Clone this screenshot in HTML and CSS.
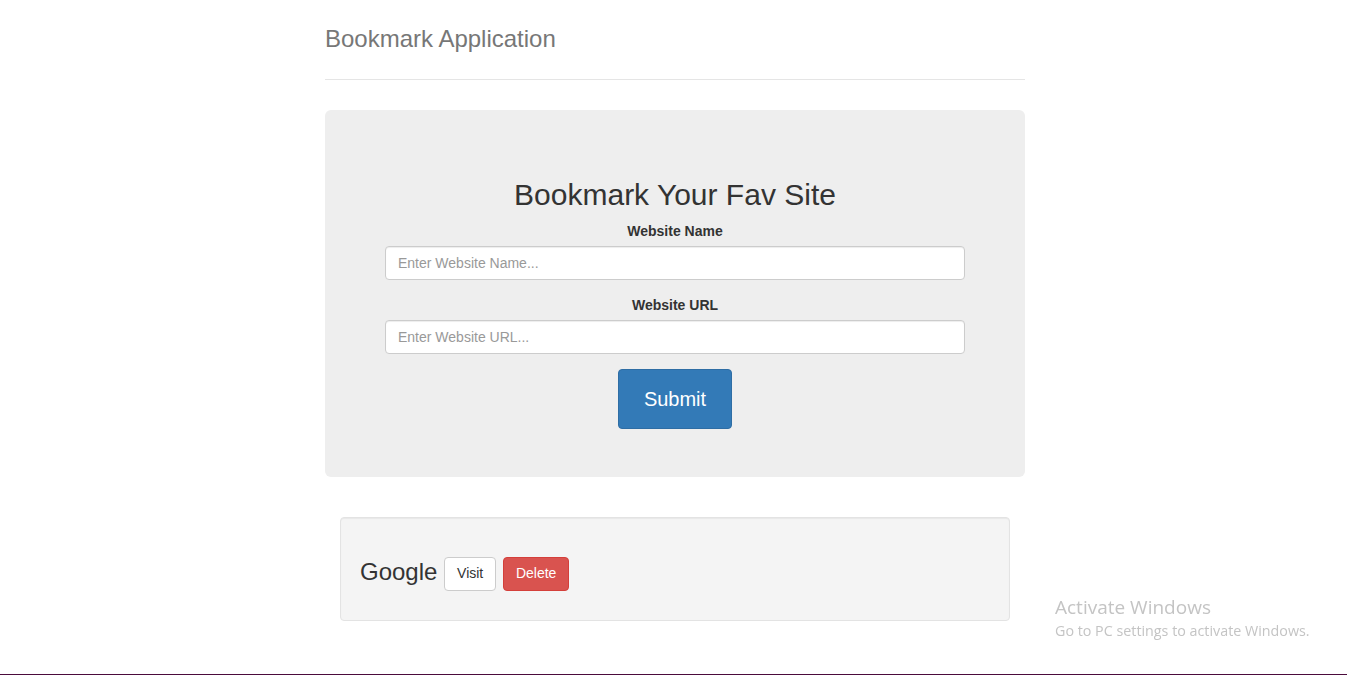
FILE: index.html
```html
<!DOCTYPE html>
<html lang="en">
<head>
<meta charset="utf-8">
<title>Bookmark Application</title>
<link rel="stylesheet" href="styles.css">
</head>
<body>
<div class="container">
  <div class="header">
    <h3 class="brand">Bookmark Application</h3>
  </div>
  <div class="jumbotron">
    <h2 class="jumbo-title">Bookmark Your Fav Site</h2>
    <form class="bm-form">
      <div class="form-group">
        <label class="form-label" for="siteName">Website Name</label>
        <input class="form-control" id="siteName" type="text" placeholder="Enter Website Name...">
      </div>
      <div class="form-group">
        <label class="form-label" for="siteUrl">Website URL</label>
        <input class="form-control" id="siteUrl" type="text" placeholder="Enter Website URL...">
      </div>
      <button class="btn btn-primary btn-submit" type="button">Submit</button>
    </form>
  </div>
  <div class="results">
    <div class="well">
      <h3 class="bm-name">Google <a class="btn btn-default" href="#">Visit</a> <a class="btn btn-danger" href="#">Delete</a></h3>
    </div>
  </div>
</div>
<div class="activate">
  <div class="activate-title">Activate Windows</div>
  <div class="activate-sub">Go to PC settings to activate Windows.</div>
</div>
<div class="taskbar-line"></div>
</body>
</html>
```
FILE: styles.css
```css
* { box-sizing: border-box; }
html, body { margin: 0; padding: 0; }
body {
  font-family: "Liberation Sans", Arial, Helvetica, sans-serif;
  font-size: 14px;
  line-height: 1.42857;
  color: #333;
  background: #fff;
  padding-top: 19px;
  padding-left: 3px;
}
.container {
  width: 730px;
  margin: 0 auto;
  padding: 0 15px;
}
.header {
  padding-bottom: 20px;
  border-bottom: 1px solid #e5e5e5;
}
.brand {
  margin: 0;
  font-size: 24px;
  font-weight: 400;
  line-height: 40px;
  color: #777;
}
.jumbotron {
  margin-top: 30px;
  margin-bottom: 30px;
  padding: 48px 60px;
  background: #eee;
  border-radius: 6px;
  text-align: center;
}
.jumbo-title {
  margin: 20px 0 10px;
  font-size: 30px;
  font-weight: 400;
  line-height: 1.1;
  color: #333;
}
.bm-form { margin: 0; }
.form-group { margin-bottom: 15px; }
.form-label {
  display: inline-block;
  margin-bottom: 5px;
  font-weight: 700;
  font-size: 14px;
  line-height: 20px;
}
.form-control {
  display: block;
  width: 100%;
  height: 34px;
  padding: 6px 12px;
  font-family: inherit;
  font-size: 14px;
  line-height: 1.42857;
  color: #555;
  background: #fff;
  border: 1px solid #ccc;
  border-radius: 4px;
  box-shadow: inset 0 1px 1px rgba(0,0,0,.075);
}
.form-control::placeholder { color: #999; }
.btn {
  display: inline-block;
  vertical-align: middle;
  padding: 6px 12px;
  font-family: inherit;
  font-size: 14px;
  font-weight: 400;
  line-height: 1.42857;
  text-align: center;
  white-space: nowrap;
  text-decoration: none;
  border: 1px solid transparent;
  border-radius: 4px;
  cursor: pointer;
}
.btn-primary {
  color: #fff;
  background: #337ab7;
  border-color: #2e6da4;
}
.btn-submit {
  padding: 16px 25px;
  font-size: 20px;
  line-height: 26px;
  border-radius: 4px;
}
.btn-default {
  color: #333;
  background: #fff;
  border-color: #ccc;
}
.btn-danger {
  color: #fff;
  background: #d9534f;
  border-color: #d43f3a;
}
.results {
  padding: 10px 15px 0;
}
.well {
  padding: 19px;
  background: #f4f4f4;
  border: 1px solid #e3e3e3;
  border-radius: 4px;
  box-shadow: inset 0 1px 1px rgba(0,0,0,.05);
}
.bm-name {
  margin: 20px 0 10px;
  font-size: 24px;
  font-weight: 400;
  line-height: 1.1;
  color: #333;
}
.activate {
  position: fixed;
  left: 1055px;
  top: 595px;
  font-family: "Open Sans", "Noto Sans", sans-serif;
  color: #c4c4c4;
  pointer-events: none;
}
.activate-title {
  font-size: 19px;
  line-height: 25px;
}
.activate-sub {
  font-size: 14.3px;
  line-height: 21px;
}
.taskbar-line {
  position: fixed;
  left: 0;
  right: 0;
  bottom: 0;
  height: 1px;
  background: #4b0b3c;
}
```
